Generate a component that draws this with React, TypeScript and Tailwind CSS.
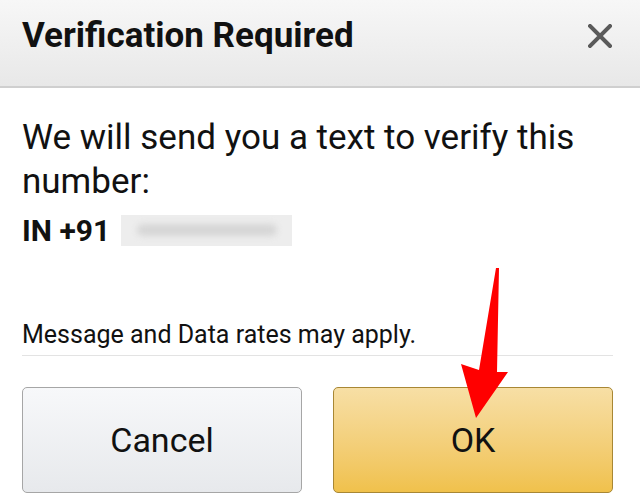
export default function App() {
  return (
    <div className="relative h-[500px] w-[640px] overflow-hidden bg-white font-['Roboto',sans-serif] text-[#111]">
      <header className="flex h-[88px] items-center justify-between border-b-2 border-[#cfcfcf] bg-gradient-to-b from-[#f7f7f7] to-[#e8e8e8] pb-[14px] pl-[22px] pr-[28px]">
        <h1 className="text-[35px] font-bold">Verification Required</h1>
        <svg width="24" height="24" viewBox="0 0 24 24">
          <path d="M2 2 L22 22 M22 2 L2 22" stroke="#5a5a5a" strokeWidth="4" strokeLinecap="square" />
        </svg>
      </header>

      <main className="pl-[22px] pr-[27px] pt-[28px]">
        <p className="text-[35px] leading-[44px]">We will send you a text to verify this number:</p>
        <div className="mt-[4px] flex h-[44px] items-center gap-[11px]">
          <span className="text-[30px] font-bold">IN +91</span>
          <span className="flex h-[31px] w-[171px] items-center justify-center bg-[#ededed]">
            <span className="h-[12px] w-[140px] rounded-full bg-[#d6d6d6] blur-[3px]" />
          </span>
        </div>
        <p className="mt-[68px] border-b border-[#e3e3e3] pb-[5px] text-[25px] leading-[30px]">
          Message and Data rates may apply.
        </p>
        <div className="mt-[31px] grid grid-cols-2 gap-[31px]">
          <button className="flex h-[106px] items-center justify-center rounded-[5px] border border-[#a6a6a6] bg-gradient-to-b from-[#f7f8fa] to-[#e7e9ec] text-[34px]">
            Cancel
          </button>
          <button className="flex h-[106px] items-center justify-center rounded-[5px] border border-[#a88734] bg-gradient-to-b from-[#f7dfa5] to-[#f0c14b] text-[34px]">
            OK
          </button>
        </div>
      </main>

      <svg className="absolute left-0 top-0" width="640" height="500" viewBox="0 0 640 500">
        <polygon points="496,268 499,268 497,372 508,372 476,418 461,364 479,370" fill="#ff0000" />
      </svg>
    </div>
  );
}
